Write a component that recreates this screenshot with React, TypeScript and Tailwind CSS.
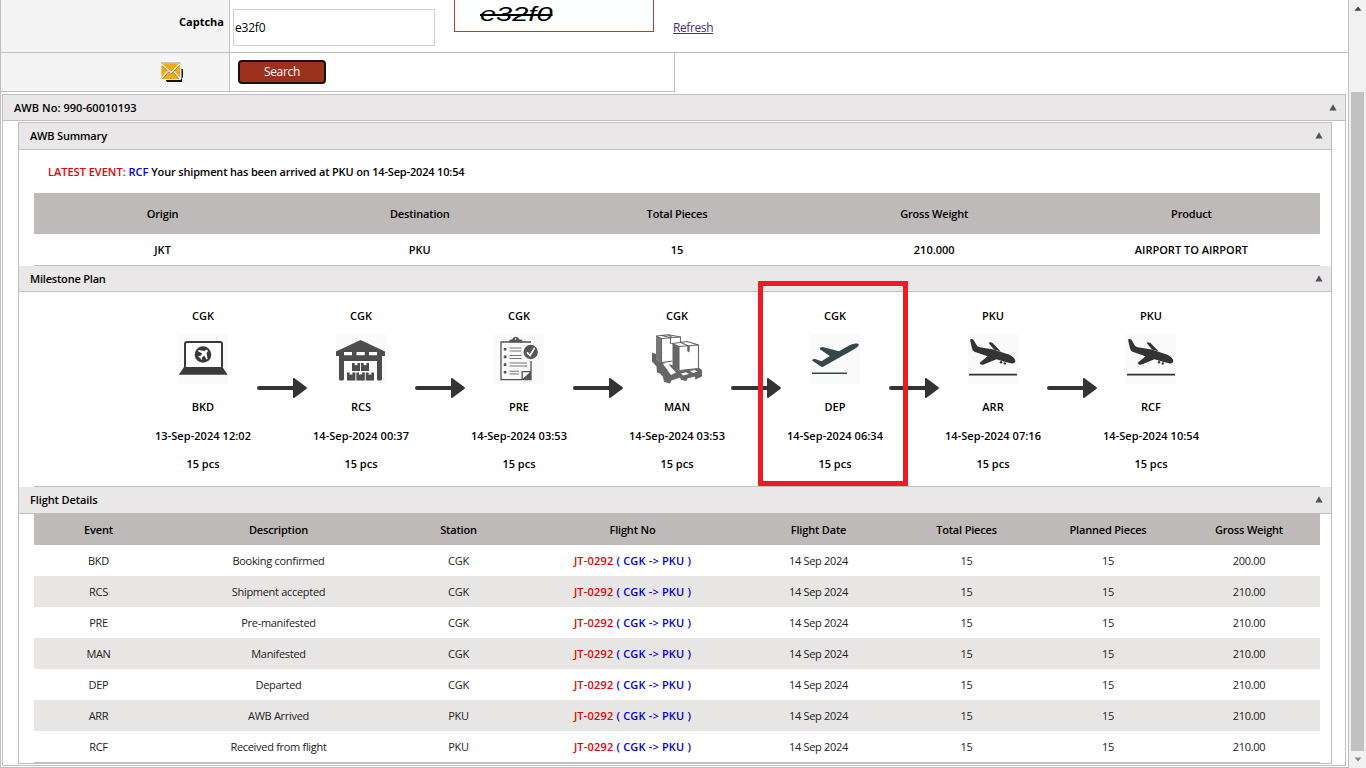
import type { ReactNode } from "react";

const DARK = "#3a3a3a";

const summary = [
    { label: "Origin", value: "JKT" },
    { label: "Destination", value: "PKU" },
    { label: "Total Pieces", value: "15" },
    { label: "Gross Weight", value: "210.000" },
    { label: "Product", value: "AIRPORT TO AIRPORT" },
];

const milestones = [
    { station: "CGK", code: "BKD", time: "13-Sep-2024 12:02", icon: <LaptopIcon /> },
    { station: "CGK", code: "RCS", time: "14-Sep-2024 00:37", icon: <WarehouseIcon /> },
    { station: "CGK", code: "PRE", time: "14-Sep-2024 03:53", icon: <ChecklistIcon /> },
    { station: "CGK", code: "MAN", time: "14-Sep-2024 03:53", icon: <PalletIcon /> },
    { station: "CGK", code: "DEP", time: "14-Sep-2024 06:34", icon: <DepartureIcon />, highlight: true },
    { station: "PKU", code: "ARR", time: "14-Sep-2024 07:16", icon: <ArrivalIcon /> },
    { station: "PKU", code: "RCF", time: "14-Sep-2024 10:54", icon: <ArrivalIcon /> },
];

const flightColumns = [
    "Event",
    "Description",
    "Station",
    "Flight No",
    "Flight Date",
    "Total Pieces",
    "Planned Pieces",
    "Gross Weight",
];

const flights = [
    { event: "BKD", description: "Booking confirmed", station: "CGK", weight: "200.00" },
    { event: "RCS", description: "Shipment accepted", station: "CGK", weight: "210.00" },
    { event: "PRE", description: "Pre-manifested", station: "CGK", weight: "210.00" },
    { event: "MAN", description: "Manifested", station: "CGK", weight: "210.00" },
    { event: "DEP", description: "Departed", station: "CGK", weight: "210.00" },
    { event: "ARR", description: "AWB Arrived", station: "PKU", weight: "210.00" },
    { event: "RCF", description: "Received from flight", station: "PKU", weight: "210.00" },
];

function LaptopIcon() {
    return (
        <svg viewBox="0 0 50 50" className="h-[50px] w-[50px] bg-[#fafafa]">
            <path d="M7 33V10Q7 8 9 8H42Q44 8 44 10V33" fill="#fff" stroke={DARK} strokeWidth="2" />
            <path d="M6 33H44.5L49.5 40.7H.8Z" fill={DARK} />
            <circle cx="25" cy="20.5" r="8.3" fill={DARK} />
            <path d="M29.6 16Q28 15.2 26.6 17L20.5 16 20 17.2 24.3 19.6 22.4 22H20.6L20.2 23 22.3 23.7 23 25.7 24 25.3V23.5L26.3 21.4 28.6 25.6 29.6 25 28.5 19Q30.4 17.6 29.6 16Z" fill="#fff" />
        </svg>
    );
}

function WarehouseIcon() {
    return (
        <svg viewBox="0 0 50 50" className="h-[50px] w-[50px] bg-[#fafafa]">
            <path d="M24.5 6 49 17.5V22H46V45Q46 46.5 44.5 46.5H42.5Q41 46.5 41 45V27H8V45Q8 46.5 6.5 46.5H4.5Q3 46.5 3 45V22H0V17.5Z" fill="#4c4c4c" />
            <path d="M8 18H16V21.3H8ZM20.5 18H28.7V21.3H20.5ZM33 18H41V21.3H33Z" fill="#fff" />
            <path
                d="M16 29H18.7V31.5L20 30.7 21.4 31.5V29H24V37H16ZM25 29H27.7V31.5L29 30.7 30.4 31.5V29H33V37H25ZM11 38.5H13.7V41L15 40.2 16.4 41V38.5H19.4V46.5H11ZM20.4 38.5H23V41L24.4 40.2 25.8 41V38.5H28.8V46.5H20.4ZM29.8 38.5H32.6V41L34 40.2 35.3 41V38.5H38V46.5H29.8Z"
                fill="#4c4c4c"
            />
        </svg>
    );
}

function ChecklistIcon() {
    return (
        <svg viewBox="0 0 50 50" className="h-[50px] w-[50px] bg-[#fafafa]">
            <path d="M37 8H7V45.7H37V27" fill="none" stroke="#555" strokeWidth="1.3" />
            <path d="M15.5 8.3V6.5Q15.5 5.5 17 5.5H18Q19 2.7 21.7 2.7 24.5 2.7 25.5 5.5H26.5Q28 5.5 28 6.5V8.3Z" fill="#555" />
            <circle cx="21.7" cy="5" r=".8" fill="#fff" />
            <path d="M9.8 14H12.4V16.6H9.8ZM9.8 21.6H12.4V24.2H9.8ZM9.8 29.3H12.4V31.9H9.8ZM9.8 37H12.4V39.6H9.8Z" fill="#555" />
            <path
                d="M15.5 14H27.5M15.5 17H27.5M15.5 21.5H27.5M15.5 24.5H27.5M15.5 29H33M15.5 32H33M15.5 37.2H25M15.5 40H25"
                stroke="#777"
                strokeWidth="1.1"
            />
            <circle cx="36.7" cy="18" r="8.2" fill="#fafafa" />
            <circle cx="36.7" cy="18" r="7.2" fill="#555" />
            <path d="M33 18.3 36 21.5 40.7 13.8" fill="none" stroke="#fff" strokeWidth="1.7" />
            <path d="M27.5 37H37V46H27.5Z" fill="#555" />
            <path d="M28.8 38.2H35.8L28.8 44.8Z" fill="#fff" />
        </svg>
    );
}

function PalletIcon() {
    return (
        <svg viewBox="0 0 50 50" className="h-[50px] w-[50px]">
            <path
                d="M0 18.5 4 20V25L10 29 20 31 27 37 46 33 50 36V42.5L43.5 45.5 42.5 42.5 35.5 44.5 34.5 47 29 46 28 43.5 19.5 46.5 18 49.5 12 48 11 43 8 39.5 5 38.5 4.5 32.5 0 27.5Z"
                fill="#666"
            />
            <path d="M11 30 15.5 29.2 24 38.5 19 41ZM29 39.5 34 38.3 37 40 31 41.5ZM38 37 42.5 36 45.5 37.5 41 39Z" fill="#fff" />
            <path d="M4 2 16 .8 28.5 3V27L9.5 28.5V4.5Z" fill="#fff" />
            <path d="M4 2 9.5 4.5V29L4 25Z" fill="#777" />
            <path d="M4 2 16 .8 28.5 3V8M9.5 4.5V28.5L20.5 27M4 2 9.5 4.5 28.5 3M10 1.4 18.5 3.8V10M16 .8 20 3.5" fill="none" stroke="#666" strokeWidth="1.1" />
            <path d="M20.5 9.5 35 7.5 46.5 11V34.5L27 36.5V12.5Z" fill="#fff" />
            <path d="M20.5 9.5V33L27 36.5V12.5Z" fill="#666" />
            <path d="M20.5 9.5 35 7.5 46.5 11V34.5L27 36.5V12.5ZM27 12.5 46.5 11M29 8.5 36.5 12V18" fill="none" stroke="#666" strokeWidth="1.1" />
            <path d="M35.3 11.5H37.7V17L36.5 18.5 35.3 17Z" fill="#666" />
        </svg>
    );
}

function DepartureIcon() {
    return (
        <svg viewBox="0 0 50 50" className="h-[50px] w-[50px] bg-[#fafafa]">
            <path
                d="M1.8 26.2Q3 24.8 5.2 25L11.5 27.2 19.8 22 9.5 15Q10.3 13 12.5 13L29 17.3 39.5 11.2Q44 9 47.3 9.6 49.7 10.2 48.2 12 47 13.5 44.5 15L14 32.3Q12 33.5 10.4 32.2Z"
                fill="#36474a"
            />
            <path d="M2 39.3H37" stroke="#36474a" strokeWidth="1.4" />
        </svg>
    );
}

function ArrivalIcon() {
    return (
        <svg viewBox="0 0 50 50" className="h-[50px] w-[50px] bg-[#fafafa]">
            <path
                d="M2 5.5Q3.5 4.7 5.3 5.6L9.2 12Q10 13 12 13.2L25.5 15.6 41.5 20.8Q47 23.5 47.3 27 47.2 29.5 44 29.4 41 29.4 28.5 25.3L15 30.7Q12.5 31.2 11.5 29L19.5 22.3 6.5 17.7Q4.5 16.8 4 14.5Z"
                fill="#333"
            />
            <path d="M20.5 8.7Q22.5 7.6 24.5 9L32.8 17.5 26 15.6Z" fill="#333" />
            <circle cx="33" cy="28.3" r="1.2" fill="#333" />
            <circle cx="36.8" cy="29.4" r="1.2" fill="#333" />
            <path d="M1.8 40.7H48.2" stroke="#333" strokeWidth="1.8" strokeLinecap="round" />
        </svg>
    );
}

function StepArrow() {
    return (
        <svg viewBox="0 0 50 22" className="mt-[85px] h-[22px] w-[50px]">
            <path d="M2 11H38" stroke="#333" strokeWidth="4" strokeLinecap="round" />
            <path d="M36 2Q36 .8 37.5 1.2L49.3 10Q50.5 11 49.3 12L37.5 20.8Q36 21.2 36 20Z" fill="#333" />
        </svg>
    );
}

function MailIcon() {
    return (
        <svg viewBox="0 0 24 21" className="h-[21px] w-6">
            <path d="M5 17H21.5V6.5L23 7.5V15L22 16.5V20H7Z" fill="#111" />
            <path d="M1 1.5H20.5V17.5H1Z" fill="#f5a81c" stroke="#f3ead2" strokeWidth="1" />
            <path d="M1 1H20.5" stroke="#8a7a55" strokeWidth=".8" />
            <path d="M1.5 2 10.8 11 20 2M1.5 17 8 9M20 17 13.5 9" fill="none" stroke="#fff8e4" strokeWidth="1.7" />
            <path d="M2 3.5 10.8 12.2 19.5 3.5M2.5 17 8 10.5M19 17 13.5 10.5" fill="none" stroke="#6b5a35" strokeWidth=".7" />
        </svg>
    );
}

function PanelHeader({ title, className }: { title: string; className: string }) {
    return (
        <div className={`flex items-center justify-between border-b border-[#bfbfbf] bg-[#e9e7e8] pr-2 pl-[11px] font-semibold ${className}`}>
            <span>{title}</span>
            <svg viewBox="0 0 8 7" className="h-[7px] w-2">
                <path d="M4 .3 7.6 6.5H.4Z" fill="#4f5560" />
            </svg>
        </div>
    );
}

function FlightRow({ className, children }: { className: string; children: ReactNode }) {
    return (
        <div className={`grid h-[31px] grid-cols-[129px_231px_129px_219px_153px_143px_140px_142px] items-center text-center ${className}`}>
            {children}
        </div>
    );
}

function SearchForm() {
    return (
        <div className="h-[92px]">
            <div className="flex h-[53px] border-b border-[#bfbfbf]">
                <div className="w-[228px] bg-[#f4f4f4] pt-[14px] pr-[5px] text-right font-bold">Captcha</div>
                <div className="flex flex-1 items-start border-l border-[#bfbfbf] pl-[3px]">
                    <div className="mt-[9px] flex h-[37px] w-[202px] items-center border border-[#d0d0d0] pl-px text-xs tracking-[-0.2px]">e32f0</div>
                    <div className="ml-[19px] h-8 w-[200px] border border-t-0 border-[#c83232] bg-[#fdfffe] pl-[25px] font-['Liberation_Sans']">
                        <span className="inline-block origin-left scale-x-[1.38] text-[21px] leading-[28px] italic line-through decoration-2">e32f0</span>
                    </div>
                    <a className="mt-5 ml-[19px] text-xs leading-4 tracking-[-0.4px] text-[#4b2a7f] underline">Refresh</a>
                </div>
            </div>
            <div className="flex h-[39px] w-[674px] border-r border-b border-[#bfbfbf]">
                <div className="flex w-[228px] justify-end bg-[#f4f4f4] pt-[9px] pr-[45px]">
                    <MailIcon />
                </div>
                <div className="flex-1 border-l border-[#bfbfbf] pt-[7px] pl-2">
                    <button className="h-6 w-[88px] rounded border-2 border-[#1a0f0d] bg-[#9c311d] text-xs leading-none tracking-[-0.3px] text-white">Search</button>
                </div>
            </div>
        </div>
    );
}

export default function App() {
    return (
        <div className="flex h-[768px] w-[1366px] overflow-hidden bg-white font-['Open_Sans','Noto_Sans',sans-serif] text-[11px] leading-[15px] text-black">
            <div className="w-[1349px] border-x border-b border-[#bfbfbf]">
                <SearchForm />

                <div className="mt-0.5 ml-px h-[672px] w-[1344px] border border-[#bfbfbf]">
                    <PanelHeader title="AWB No: 990-60010193" className="h-[26px] tracking-[0.05px]" />

                    <div className="mt-px ml-[15px] h-[642px] w-[1314px] border border-[#bfbfbf]">
                        <PanelHeader title="AWB Summary" className="h-[27px] pb-px tracking-[-0.18px]" />
                        <div className="h-[43px] pt-[14px] pl-[29px] font-semibold">
                            <span className="text-[#e60000]">LATEST EVENT:</span> <span className="text-[#0000cc]">RCF</span>{" "}
                            <span className="tracking-[-0.17px]">Your shipment has been arrived at PKU on 14-Sep-2024 10:54</span>
                        </div>
                        <div className="mx-[15px] w-[1286px] border-b border-[#bfbfbf] text-center font-semibold">
                            <div className="grid h-[41px] grid-cols-5 items-center bg-[#bebaba] tracking-[-0.18px]">
                                {summary.map((s) => (
                                    <div key={s.label}>{s.label}</div>
                                ))}
                            </div>
                            <div className="grid h-[31px] grid-cols-5 items-center">
                                {summary.map((s) => (
                                    <div key={s.label}>{s.value}</div>
                                ))}
                            </div>
                        </div>

                        <PanelHeader title="Milestone Plan" className="h-[26px] tracking-[-0.2px]" />
                        <div className="mx-[15px] flex h-[195px] w-[1286px] justify-center border-b border-[#bfbfbf] font-semibold">
                            {milestones.map((m, i) => (
                                <div key={m.code} className="flex">
                                    {i > 0 && <StepArrow />}
                                    <div className="relative flex w-[108px] flex-col items-center pt-4">
                                        {m.highlight && <div className="absolute -top-[11px] -left-[23px] z-10 h-[205px] w-[150px] border-5 border-[#ed1c24]" />}
                                        <span>{m.station}</span>
                                        <div className="mt-[11px] h-[50px]">{m.icon}</div>
                                        <span className="mt-[15px]">{m.code}</span>
                                        <span className="mt-[14px] tracking-[0.06px] whitespace-nowrap">{m.time}</span>
                                        <span className="mt-[13px]">15 pcs</span>
                                    </div>
                                </div>
                            ))}
                        </div>

                        <PanelHeader title="Flight Details" className="h-[27px] pb-px tracking-[-0.1px]" />
                        <div className="mx-[15px] w-[1286px] border-b border-[#bfbfbf]">
                            <FlightRow className="bg-[#bebaba] font-semibold tracking-[-0.18px]">
                                {flightColumns.map((c) => (
                                    <div key={c}>{c}</div>
                                ))}
                            </FlightRow>
                            {flights.map((f, i) => (
                                <FlightRow key={f.event} className={i % 2 ? "bg-[#e8e6e5] tracking-[-0.3px] text-[#222]" : "tracking-[-0.3px] text-[#222]"}>
                                    <div>{f.event}</div>
                                    <div>{f.description}</div>
                                    <div>{f.station}</div>
                                    <div className="font-semibold tracking-[0.18px]">
                                        <span className="text-[#e60000]">JT-0292</span> <span className="text-[#0000cc]">( CGK -&gt; PKU )</span>
                                    </div>
                                    <div>14 Sep 2024</div>
                                    <div>15</div>
                                    <div>15</div>
                                    <div>{f.weight}</div>
                                </FlightRow>
                            ))}
                        </div>
                    </div>
                </div>
            </div>

            {/* scrollbar */}
            <div className="flex w-[17px] flex-col items-center bg-[#f1f1f1]">
                <svg viewBox="0 0 8 5" className="mt-[6px] h-[5px] w-2">
                    <path d="M.5 4.7H7.5L4 .6Z" fill="#444" />
                </svg>
                <div className="mt-[81px] h-[659px] w-[13px] bg-[#c1c1c1]" />
                <svg viewBox="0 0 8 5" className="mt-[6px] h-[5px] w-2">
                    <path d="M.5 .5H7.5L4 4.5Z" fill="#8a8a8a" />
                </svg>
            </div>
        </div>
    );
}
